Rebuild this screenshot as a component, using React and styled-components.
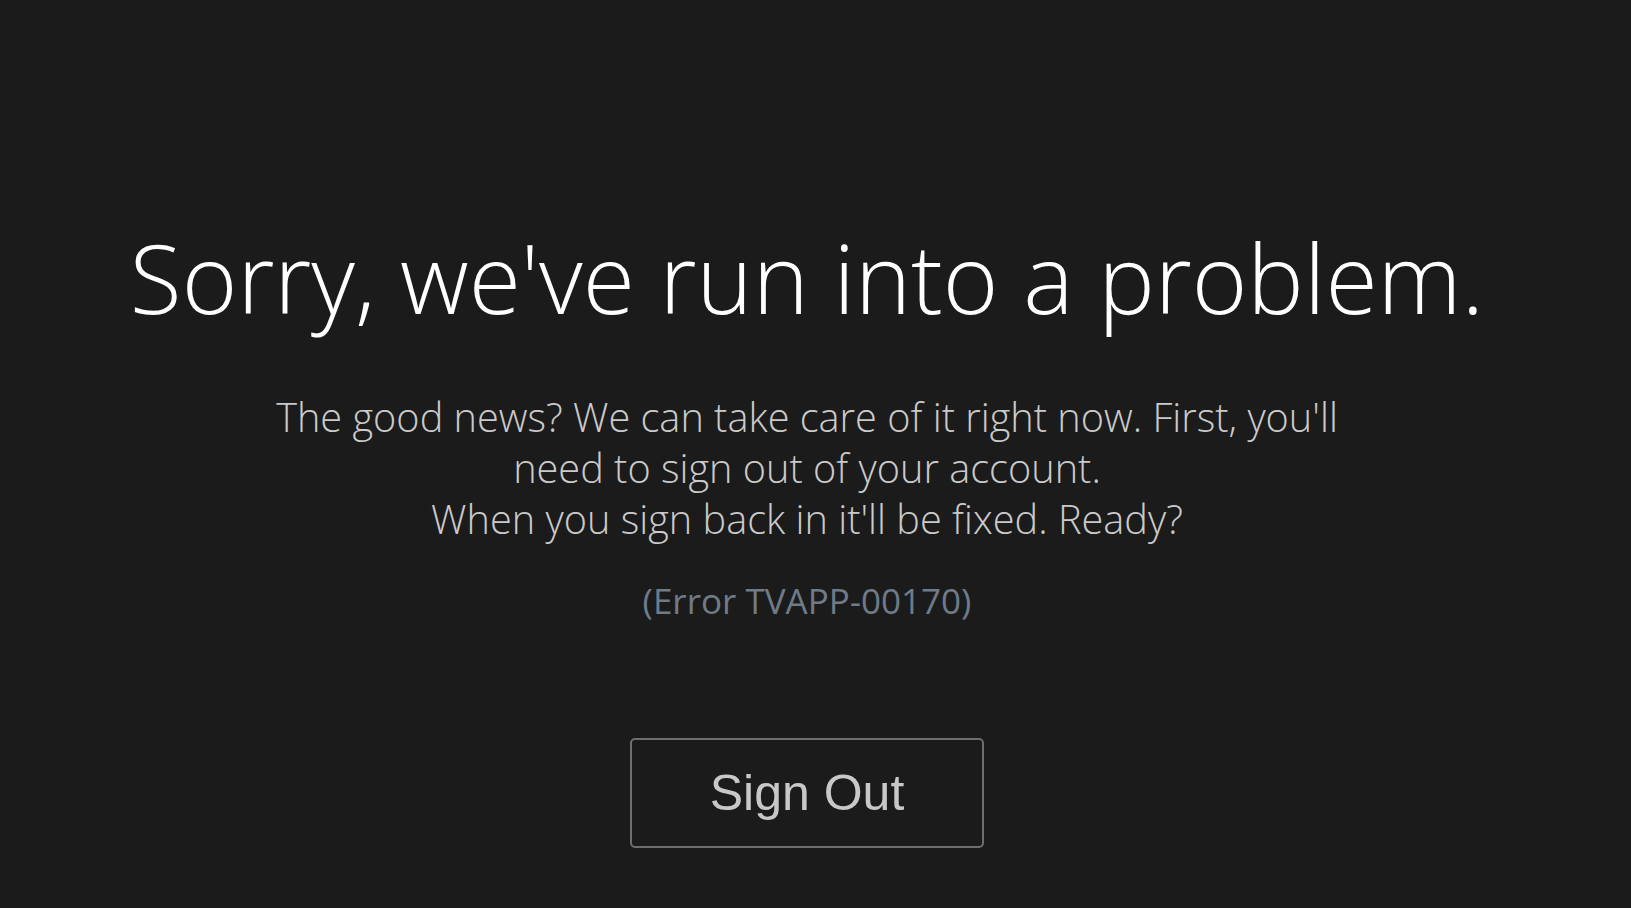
import React from 'react';
import styled, { createGlobalStyle } from 'styled-components';

const GlobalStyle = createGlobalStyle`
  html, body {
    margin: 0;
    padding: 0;
    background-color: #1b1b1b;
  }
  body {
    font-family: "Open Sans", "Noto Sans", sans-serif;
  }
`;

const Screen = styled.div`
  min-height: 100vh;
  box-sizing: border-box;
  display: flex;
  flex-direction: column;
  align-items: center;
  padding: 217px 17px 0 0;
  background-color: #1b1b1b;
`;

const Title = styled.h1`
  margin: 0;
  font-family: "Open Sans", sans-serif;
  font-weight: 300;
  font-size: 95px;
  line-height: 120px;
  color: #ffffff;
  text-align: center;
`;

const Message = styled.p`
  margin: 55px 0 0;
  max-width: 1100px;
  font-family: "Open Sans", sans-serif;
  font-weight: 300;
  font-size: 39.7px;
  line-height: 51px;
  color: #cacaca;
  text-align: center;
`;

const ErrorCode = styled.div`
  margin-top: 36px;
  font-family: "Open Sans", sans-serif;
  font-weight: 400;
  font-size: 35px;
  line-height: 40px;
  color: #6f7b88;
`;

const SignOutButton = styled.button`
  margin-top: 117px;
  width: 354px;
  height: 110px;
  background: transparent;
  border: 2px solid #6e6e6e;
  border-radius: 5px;
  color: #c8c8c8;
  font-family: "Liberation Sans", Arial, sans-serif;
  font-size: 50px;
  cursor: pointer;
`;

const App = () => {
  return (
    <>
      <GlobalStyle />
      <Screen>
        <Title>Sorry, we've run into a problem.</Title>
        <Message>
          The good news? We can take care of it right now. First, you'll need to sign out of your account.
          <br />
          When you sign back in it'll be fixed. Ready?
        </Message>
        <ErrorCode>(Error TVAPP-00170)</ErrorCode>
        <SignOutButton>Sign Out</SignOutButton>
      </Screen>
    </>
  );
};

export default App;
